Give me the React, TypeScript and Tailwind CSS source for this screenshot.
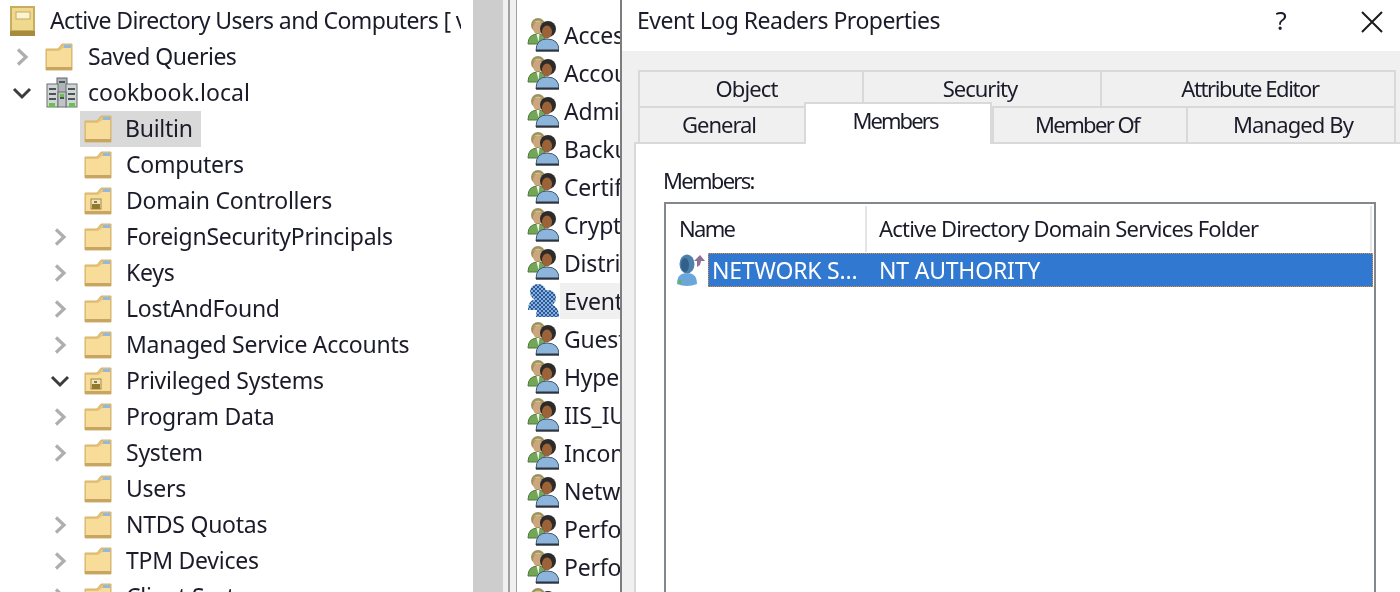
type TreeItem = { label: string; arrow?: "right" | "down"; special?: boolean };

const treeItems: TreeItem[] = [
  { label: "Computers" },
  { label: "Domain Controllers", special: true },
  { label: "ForeignSecurityPrincipals", arrow: "right" },
  { label: "Keys", arrow: "right" },
  { label: "LostAndFound", arrow: "right" },
  { label: "Managed Service Accounts", arrow: "right" },
  { label: "Privileged Systems", arrow: "down", special: true },
  { label: "Program Data", arrow: "right" },
  { label: "System", arrow: "right" },
  { label: "Users" },
  { label: "NTDS Quotas", arrow: "right" },
  { label: "TPM Devices", arrow: "right" },
  { label: "Client Systems", arrow: "right" },
];

const groups = [
  "Access Control Assistance Operators",
  "Account Operators",
  "Administrators",
  "Backup Operators",
  "Certificate Service DCOM Access",
  "Cryptographic Operators",
  "Distributed COM Users",
  "Event Log Readers",
  "Guests",
  "Hyper-V Administrators",
  "IIS_IUSRS",
  "Incoming Forest Trust Builders",
  "Network Configuration Operators",
  "Performance Log Users",
  "Performance Monitor Users",
  "Pre-Windows 2000 Compatible Access",
];

function Folder({ special }: { special?: boolean }) {
  return (
    <svg width="28" height="28" viewBox="0 0 28 28" className="shrink-0">
      <path d="M1 6 L1 27 L27 27 L27 1 L17 1 L13 6 Z" fill="#e6c375" stroke="#d3b36f" strokeWidth="1" />
      <rect x="19" y="2" width="7" height="3" fill="#8fb8e4" />
      <path d="M2 8 L14 8 L18 5 L26 5 L26 24 L2 24 Z" fill="#f8dd9a" />
      <rect x="1" y="24" width="26" height="3" fill="#c8a561" />
      {special && (
        <g>
          <rect x="7" y="12" width="10" height="10" fill="#efe3bd" stroke="#a08a45" />
          <rect x="8" y="17" width="8" height="5" fill="#93782f" />
          <rect x="10" y="14" width="3" height="2" fill="#8d7a3c" />
        </g>
      )}
    </svg>
  );
}

function Domain() {
  return (
    <svg width="32" height="32" viewBox="0 0 32 32" className="shrink-0">
      <rect x="11" y="1" width="10" height="15" fill="#aeb5b8" stroke="#5f6669" />
      <rect x="1" y="7" width="11" height="23" fill="#d0d5d6" stroke="#6a7173" />
      <rect x="20" y="7" width="11" height="23" fill="#d0d5d6" stroke="#6a7173" />
      <rect x="12" y="15" width="8" height="15" fill="#bfc5c7" stroke="#6a7173" />
      <path d="M3 12h7M22 12h7M13 5h6M3 17h7M22 17h7M14 21h4M3 22h7M22 22h7" stroke="#4d5458" strokeWidth="2" />
      <rect x="3" y="26" width="6" height="4" fill="#68c14c" />
      <rect x="23" y="26" width="6" height="4" fill="#68c14c" />
      <rect x="14" y="17" width="4" height="3" fill="#68c14c" />
    </svg>
  );
}

function Group({ selected }: { selected?: boolean }) {
  if (selected) {
    return (
      <svg width="32" height="34" viewBox="0 0 32 34" className="shrink-0">
        <defs>
          <pattern id="dither" width="4" height="4" patternUnits="userSpaceOnUse">
            <rect width="4" height="4" fill="#8ab0da" />
            <rect width="2" height="2" fill="#2a5a9e" />
            <rect x="2" y="2" width="2" height="2" fill="#2a5a9e" />
          </pattern>
        </defs>
        <circle cx="11" cy="8" r="8" fill="url(#dither)" />
        <path d="M1 26 Q1 15 11 15 Q20 15 20 26 Z" fill="url(#dither)" />
        <circle cx="21" cy="14" r="8" fill="url(#dither)" />
        <path d="M9 33 Q9 20 20 20 Q32 20 32 33 Z" fill="url(#dither)" />
      </svg>
    );
  }
  return (
    <svg width="32" height="34" viewBox="0 0 32 34" className="shrink-0">
      <circle cx="11" cy="7" r="7" fill="#9d935f" />
      <path d="M5 6 Q11 -1 17 6 L14 4 L8 4 Z" fill="#d8cf9a" />
      <ellipse cx="11" cy="10" rx="5" ry="6.5" fill="#cda67e" />
      <path d="M1 26 Q1 16 11 16 Q19 16 19 26 Z" fill="#74a657" stroke="#4d7a3a" />
      <path d="M9.5 16 L12.5 16 L11.5 24 Z" fill="#f3f3ee" />
      <circle cx="21" cy="11" r="8" fill="#2d2b29" />
      <ellipse cx="20" cy="14" rx="5" ry="6.5" fill="#9c6238" />
      <path d="M9 33 Q9 21 20 21 Q32 21 32 33 Z" fill="#8db5db" stroke="#3f5a78" />
      <rect x="9" y="31.5" width="23" height="2" fill="#2f3338" />
    </svg>
  );
}

function Arrow({ dir }: { dir?: "right" | "down" }) {
  if (dir === "down") {
    return (
      <svg width="20" height="13" viewBox="0 0 20 13" fill="none">
        <path d="M2 2 L10 10 L18 2" stroke="#3c3c3c" strokeWidth="3" />
      </svg>
    );
  }
  if (dir === "right") {
    return (
      <svg width="13" height="18" viewBox="0 0 13 18" fill="none">
        <path d="M2 1.5 L10 9 L2 16.5" stroke="#aeaeae" strokeWidth="3.2" />
      </svg>
    );
  }
  return null;
}

function Tab({ label, className }: { label: string; className: string }) {
  return (
    <div className={`flex items-center justify-center bg-[#f0f0f0] border-[#d9d9d9] border-t-2 border-l-2 pb-[2px] text-[22px] ${className}`}>
      {label}
    </div>
  );
}

export default function App() {
  return (
    <div className="w-[1400px] h-[592px] flex overflow-hidden bg-white text-[#1b1b2a] blur-[0.4px] font-['Noto_Sans','Open_Sans',sans-serif]">
      {/* tree */}
      <div className="w-[473px] shrink-0 pt-[3px] overflow-hidden text-[23px] tracking-[-0.25px]">
        <div className="h-[36px] flex items-center pl-[10px] gap-[15px] whitespace-nowrap overflow-hidden">
          <svg width="25" height="30" viewBox="0 0 25 30" className="shrink-0">
            <rect width="25" height="30" fill="#c9ad5e" />
            <rect x="2" y="2" width="21" height="22" fill="#efd98f" />
            <rect x="6" y="6" width="14" height="7" fill="#fbf3d2" stroke="#c4a95f" />
            <rect y="25" width="25" height="5" fill="#a88a3f" />
          </svg>
          <span className="w-[411px] overflow-hidden pb-[2px] tracking-[-0.62px]">Active Directory Users and Computers [ v</span>
        </div>
        <div className="h-[36px] flex items-center pl-[10px] whitespace-nowrap">
          <span className="w-[24px] flex justify-center"><Arrow dir="right" /></span>
          <span className="ml-[11px] w-[28px]"><Folder /></span>
          <span className="ml-[15px] pb-[2px] tracking-[-0.5px]">Saved Queries</span>
        </div>
        <div className="h-[36px] flex items-center pl-[10px] whitespace-nowrap">
          <span className="w-[24px] flex justify-center"><Arrow dir="down" /></span>
          <span className="ml-[12px] w-[32px]"><Domain /></span>
          <span className="ml-[10px] pb-[2px] tracking-[0.05px]">cookbook.local</span>
        </div>
        <div className="h-[36px] flex items-center pl-[48px] whitespace-nowrap">
          <span className="w-[24px]" />
          <span className="flex items-center bg-[#d9d9d9] h-[36px] pl-[4px] w-[121px] ml-[8px]">
            <Folder />
            <span className="ml-[13px] pb-[2px]">Builtin</span>
          </span>
        </div>
        {treeItems.map((item) => (
          <div key={item.label} className="h-[36px] flex items-center pl-[48px] whitespace-nowrap">
            <span className="w-[24px] flex justify-center"><Arrow dir={item.arrow} /></span>
            <span className="ml-[12px]"><Folder special={item.special} /></span>
            <span className="ml-[14px] pb-[2px]">{item.label}</span>
          </div>
        ))}
      </div>

      {/* scrollbar and splitter */}
      <div className="w-[30px] shrink-0 bg-[#cdcdcd]" />
      <div className="w-[5px] shrink-0 bg-[#f0f0f0]" />
      <div className="w-[2px] shrink-0 bg-[#a0a0a0]" />
      <div className="w-[6px] shrink-0 bg-[#f0f0f0]" />
      <div className="w-[1px] shrink-0 bg-[#a0a0a0]" />

      {/* group list */}
      <div className="w-[103px] shrink-0 pt-[16px] overflow-hidden text-[23px] tracking-[-0.2px]">
        {groups.map((name) => {
          const selected = name === "Event Log Readers";
          return (
            <div key={name} className="h-[38px] flex items-center pl-[10px] whitespace-nowrap overflow-hidden">
              <Group selected={selected} />
              <span className={`ml-[1px] flex-1 h-[36px] flex items-center pl-[4px] ${selected ? "bg-[#f0f0f0]" : ""}`}>{name}</span>
            </div>
          );
        })}
      </div>

      {/* dialog */}
      <div className="w-[780px] shrink-0 border-l-2 border-[#7d7d7d] flex flex-col">
        <div className="h-[51px] shrink-0 bg-white flex items-center pl-[15px] text-[23px] tracking-[-0.52px]">
          <span className="flex-1 -mt-[10px]">Event Log Readers Properties</span>
          <span className="w-[20px] text-center text-[26px] -mt-[10px]">?</span>
          <span className="w-[109px] flex justify-end pr-[16px] -mt-[8px]">
            <svg width="24" height="24" viewBox="0 0 24 24" fill="none">
              <path d="M2 2 L22 22 M22 2 L2 22" stroke="#1b1b1b" strokeWidth="2" />
            </svg>
          </span>
        </div>
        <div className="flex-1 bg-[#f0f0f0] flex flex-col pl-[12px] pr-[4px]">
          <div className="h-[19px] shrink-0" />
          <div className="flex pl-[4px] h-[36px] shrink-0">
            <Tab label="Object" className="w-[224px] tracking-[-0.9px] pr-[9px]" />
            <Tab label="Security" className="w-[238px] tracking-[-1px] pr-[4px]" />
            <Tab label="Attribute Editor" className="flex-1 border-r-2 tracking-[-1.4px] pl-[4px]" />
          </div>
          <div className="flex pl-[4px] h-[36px] shrink-0">
            <Tab label="General" className="w-[166px] tracking-[-1px] pr-[6px]" />
            <div className="relative w-[188px] h-[42px] -mt-[4px] bg-white border-[#d9d9d9] border-t-2 border-x-2 flex items-start justify-center pr-[6px] text-[22px] tracking-[-1.9px]">
              Members
            </div>
            <Tab label="Member Of" className="w-[194px] tracking-[-1.6px] pr-[6px]" />
            <Tab label="Managed By" className="flex-1 border-r-2 tracking-[-0.9px] pl-[4px]" />
          </div>
          <div className="flex-1 -mr-[4px] bg-white border-t-2 border-l-2 border-[#d9d9d9] pl-[28px] pr-[24px]">
            <div className="h-[58px] flex items-center text-[22px] tracking-[-1.7px] pt-[14px] -ml-[1px]">Members:</div>
            <div className="h-[400px] border-2 border-[#828790] pt-[2px]">
              <div className="h-[46px] flex items-center text-[22px] pr-[2px]">
                <div className="w-[201px] h-full border-r-2 border-[#e5e5e5] pl-[13px] pb-[2px] flex items-center tracking-[-1.7px]">Name</div>
                <div className="flex-1 h-full border-r-2 border-[#e5e5e5] pl-[12px] pb-[2px] flex items-center tracking-[-0.8px]">Active Directory Domain Services Folder</div>
              </div>
              <div className="h-[36px] flex items-center">
                <svg width="30" height="34" viewBox="0 0 30 34" className="ml-[10px] shrink-0">
                  <ellipse cx="11" cy="11" rx="7.5" ry="9.5" fill="#4d81ab" />
                  <ellipse cx="9" cy="12" rx="4" ry="7" fill="#33608a" />
                  <path d="M1 31 Q1 20 11 20 Q21 20 21 31 Q11 35 1 31 Z" fill="#6ba6da" />
                  <circle cx="4" cy="29" r="2" fill="#66b45a" />
                  <path d="M21 14 L21 8 L18 8 L24 2 L29 8 L25 8 L24 12 Z" fill="#8e7196" />
                </svg>
                <div className="ml-[2px] flex-1 mr-[1px] h-[34px] bg-[#3078d0] border border-dotted border-[#f08a24] flex items-center text-white text-[23px] tracking-[-0.2px] whitespace-nowrap">
                  <span className="w-[170px] pl-[3px]">NETWORK S...</span>
                  <span>NT AUTHORITY</span>
                </div>
              </div>
            </div>
          </div>
        </div>
      </div>
    </div>
  );
}
